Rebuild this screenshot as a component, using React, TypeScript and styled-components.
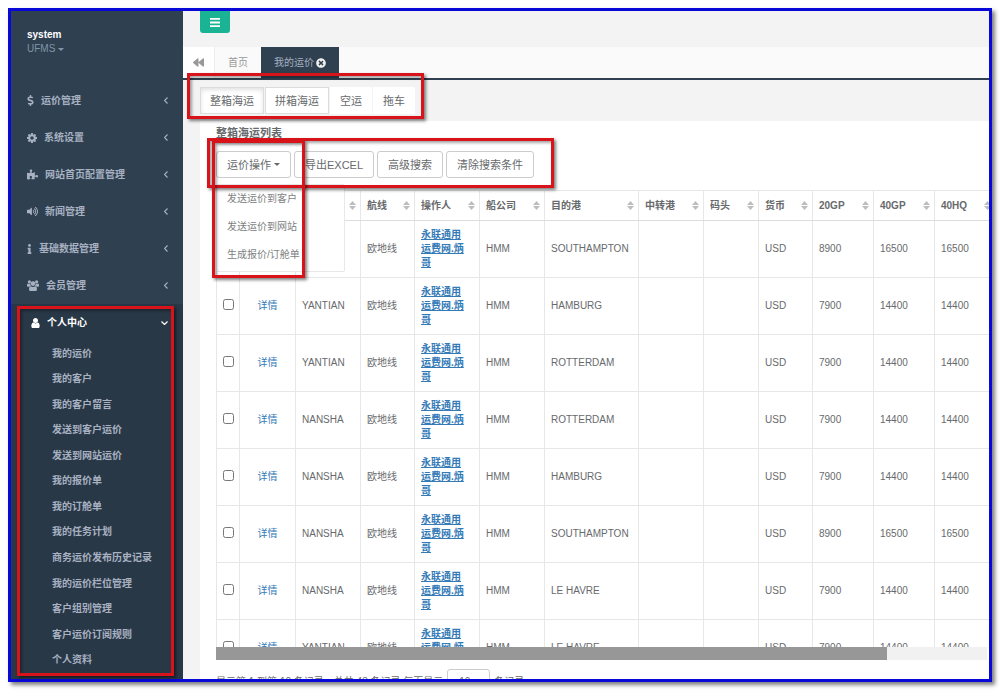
import React from 'react';
import styled, { createGlobalStyle, css } from 'styled-components';
import {
  FaBackward,
  FaDollarSign,
  FaInfo,
  FaPuzzlePiece,
  FaTimesCircle,
  FaVolumeUp,
} from 'react-icons/fa';

const color = {
  navy: '#2f4050',
  navyDark: '#293846',
  navText: '#a7b1c2',
  text: '#676a6c',
  link: '#337ab7',
  line: '#e7e7e7',
  page: '#f3f3f4',
  red: '#d8141a',
  blue: '#0808d8',
  green: '#1ab394',
};

const GlobalStyle = createGlobalStyle`
  *, *::before, *::after { box-sizing: border-box; }
  body {
    margin: 0;
    background: #fff;
    color: ${color.text};
    font-family: "Liberation Sans", "Noto Sans CJK SC", sans-serif;
    font-size: 10px;
    line-height: 14px;
  }
  button, select, input { font: inherit; color: inherit; margin: 0; }
  ul { list-style: none; margin: 0; padding: 0; }
  a { text-decoration: none; color: inherit; }
`;

const Page = styled.div`
  display: flex;
  height: 100vh;
  padding: 8px 8px 9px;
`;

const Frame = styled.div`
  position: relative;
  flex: 1;
  display: flex;
  min-width: 0;
  border: 3px solid ${color.blue};
  box-shadow: 3px 3px 4px rgba(0, 0, 0, 0.5);
`;

const Highlight = styled.div<{ $x: number; $y: number; $w: number; $h: number }>`
  position: absolute;
  z-index: 5;
  left: ${(p) => p.$x}px;
  top: ${(p) => p.$y}px;
  width: ${(p) => p.$w}px;
  height: ${(p) => p.$h}px;
  border: 3px solid ${color.red};
  box-shadow: 2px 2px 3px rgba(0, 0, 0, 0.5), inset 2px 2px 3px rgba(0, 0, 0, 0.35);
  pointer-events: none;
`;

/* Sidebar */

const Sidebar = styled.nav`
  display: flex;
  flex-direction: column;
  flex: 0 0 172px;
  background: ${color.navy};
  color: ${color.navText};
  overflow: hidden;
`;

const Profile = styled.div`
  height: 71px;
  padding: 17px 16px 0;
  color: #8095a8;
`;

const UserName = styled.strong`
  display: block;
  color: #fff;
`;

const Account = styled.a`
  display: inline-flex;
  align-items: center;
  gap: 3px;
`;

const Menu = styled.ul`
  flex: 1;
  display: flex;
  flex-direction: column;
  font-weight: 700;
`;

const MenuEntry = styled.li<{ $open?: boolean }>`
  ${(p) =>
    p.$open &&
    css`
      flex: 1;
      display: flex;
      flex-direction: column;
      padding-left: 4px;
      background: ${color.navyDark};
    `}
`;

const MenuLink = styled.a<{ $open?: boolean }>`
  display: flex;
  align-items: center;
  height: 37px;
  padding: 0 15px 0 16px;
  color: ${(p) => (p.$open ? '#fff' : 'inherit')};
`;

const MenuLabel = styled.span`
  flex: 1;
  margin-left: 7px;
`;

const SubMenu = styled.ul`
  flex: 1;
  display: flex;
  flex-direction: column;
  padding-bottom: 6px;
`;

const SubEntry = styled.li`
  flex: 1;
  display: flex;
  align-items: center;
  padding-left: 37px;
`;

/* Main column */

const Main = styled.main`
  flex: 1;
  min-width: 0;
  display: flex;
  flex-direction: column;
  background: ${color.page};
  overflow: hidden;
`;

const TopBar = styled.header`
  display: flex;
  align-items: flex-start;
  height: 36px;
  padding-left: 17px;
`;

const ToggleButton = styled.button`
  display: flex;
  align-items: center;
  justify-content: center;
  width: 30px;
  height: 22px;
  padding: 0;
  border: 0;
  border-radius: 0 0 3px 3px;
  background: ${color.green};
  color: #fff;
`;

const TabStrip = styled.div`
  display: flex;
  height: 33px;
  background: #fafafa;
  border-bottom: 2px solid ${color.navy};
`;

const ScrollTabs = styled.button`
  width: 32px;
  padding: 0;
  border: 0;
  border-right: 1px solid #eee;
  background: #fff;
  color: #999;
  display: flex;
  align-items: center;
  justify-content: center;
`;

const Tab = styled.a<{ $active?: boolean }>`
  display: flex;
  align-items: center;
  gap: 2px;
  padding: 0 13px;
  color: ${(p) => (p.$active ? color.navText : '#999')};
  background: ${(p) => (p.$active ? color.navy : 'transparent')};
`;

const CloseIcon = styled(FaTimesCircle)`
  color: #eee;
`;

const Content = styled.div`
  flex: 1;
  min-height: 0;
  display: flex;
  flex-direction: column;
  gap: 7px;
  padding: 7px 0 0 17px;
`;

const ModeGroup = styled.div`
  display: flex;
  gap: 1px;
  height: 27px;
  font-size: 11px;
`;

const ModeButton = styled.button<{ $state?: 'pressed' | 'outlined' }>`
  padding: 0 9px;
  border: 1px solid ${(p) => (p.$state ? '#dcdcdc' : '#fff')};
  background: #fff;
  box-shadow: ${(p) => (p.$state === 'pressed' ? 'inset 0 2px 4px rgba(0, 0, 0, 0.12)' : 'none')};
`;

const Card = styled.section`
  flex: 1;
  min-height: 0;
  display: flex;
  flex-direction: column;
  padding: 5px 0 0 16px;
  background: #fff;
`;

const CardTitle = styled.h1`
  margin: 0 0 11px;
  font-size: 11px;
  line-height: 14px;
  font-weight: 700;
`;

const Toolbar = styled.div`
  position: relative;
  display: flex;
  gap: 3px;
  margin-bottom: 12px;
  font-size: 11px;
`;

const ToolButton = styled.button`
  display: flex;
  align-items: center;
  gap: 3px;
  height: 27px;
  padding: 0 10px;
  border: 1px solid #ccc;
  border-radius: 3px;
  background: #fff;
`;

const Dropdown = styled.ul`
  position: absolute;
  z-index: 2;
  left: 0;
  top: 33px;
  width: 129px;
  padding-bottom: 2px;
  border: 1px solid #e8e8e8;
  border-radius: 2px;
  background: #fff;
  font-size: 10px;
`;

const DropdownLink = styled.a`
  display: block;
  padding: 0 10px;
  line-height: 28px;
  color: #7d7f81;
  white-space: nowrap;
`;

const TableScroller = styled.div`
  flex: 1;
  min-height: 0;
  overflow: hidden;
`;

const Table = styled.table`
  width: 779px;
  table-layout: fixed;
  border-collapse: collapse;
`;

const HeadCell = styled.th`
  height: 30px;
  padding: 0 4px 0 6px;
  border: 1px solid ${color.line};
  border-bottom-color: #ddd;
  text-align: left;
  font-weight: 700;
`;

const HeadInner = styled.div`
  display: flex;
  align-items: center;
  justify-content: space-between;
  white-space: nowrap;
`;

const Cell = styled.td<{ $wrap?: boolean; $center?: boolean }>`
  height: 57px;
  padding: ${(p) => (p.$center ? '0' : p.$wrap ? '7px 12px 7px 6px' : '7px 8px 7px 6px')};
  border: 1px solid ${color.line};
  text-align: ${(p) => (p.$center ? 'center' : 'left')};
  white-space: ${(p) => (p.$wrap ? 'normal' : 'nowrap')};
  vertical-align: middle;
`;

const RowCheck = styled.input`
  display: block;
  width: 11px;
  height: 11px;
  margin: 0 auto 3px;
`;

const DetailLink = styled.a`
  color: ${color.link};
`;

const OperatorLink = styled.a`
  color: ${color.link};
  font-weight: 700;
  text-decoration: underline;
`;

const ScrollTrack = styled.div`
  height: 13px;
  margin-right: 2px;
  background: #f1f1f1;
`;

const ScrollThumb = styled.div`
  width: 87%;
  height: 100%;
  background: #979797;
`;

const Pager = styled.footer`
  height: 19px;
  padding-top: 9px;
  overflow: hidden;
`;

const PagerLabel = styled.label`
  display: flex;
  align-items: center;
  gap: 4px;
`;

const PageSize = styled.select`
  width: 43px;
  height: 26px;
  padding: 0 11px;
  appearance: none;
  border: 1px solid #ccc;
  border-radius: 3px;
  background: #fff;
`;

/* Icons */

const SortIcon = () => (
  <svg width="7" height="9" viewBox="0 0 7 9" fill="#bdbdbd" aria-hidden="true">
    <path d="M3.5 0 7 4H0z" />
    <path d="M0 5h7L3.5 9z" />
  </svg>
);

const Caret = () => (
  <svg width="6" height="3" viewBox="0 0 6 3" fill="currentColor" aria-hidden="true">
    <path d="M0 0h6L3 3z" />
  </svg>
);

const Bars = () => (
  <svg width="10" height="9" viewBox="0 0 10 9" fill="currentColor" aria-hidden="true">
    <path d="M0 0h10v1.8H0zM0 3.6h10v1.8H0zM0 7.2h10V9H0z" />
  </svg>
);

const Chevron = ({ down }: { down?: boolean }) => (
  <svg
    width={down ? 7 : 4}
    height={down ? 4 : 7}
    viewBox={down ? '0 0 7 4' : '0 0 4 7'}
    fill="none"
    stroke="currentColor"
    strokeWidth="1.2"
    aria-hidden="true"
  >
    <path d={down ? 'M.5.5l3 3 3-3' : 'M3.5.5l-3 3 3 3'} />
  </svg>
);

const Cog = () => (
  <svg width="10" height="10" viewBox="128 128 1536 1536" fill="currentColor" aria-hidden="true">
    <path d="M1152 896q0-106-75-181t-181-75-181 75-75 181 75 181 181 75 181-75 75-181zm512-109v222q0 12-8 23t-20 13l-185 28q-19 54-39 91 35 50 107 138 10 12 10 25t-9 23q-27 37-99 108t-94 71q-12 0-26-9l-138-108q-44 23-91 38-16 136-29 186-7 28-36 28h-222q-14 0-24.5-8.5t-11.5-21.5l-28-184q-49-16-90-37l-141 107q-10 9-25 9-14 0-25-11-126-114-165-168-7-10-7-23 0-12 8-23 15-21 51-66.5t54-70.5q-27-50-41-99l-183-27q-13-2-21-12.5t-8-23.5v-222q0-12 8-23t19-13l186-28q14-46 39-92-40-57-107-138-10-12-10-24 0-10 9-23 26-36 98.5-107.5t94.5-71.5q13 0 26 10l138 107q44-23 91-38 16-136 29-186 7-28 36-28h222q14 0 24.5 8.5t11.5 21.5l28 184q49 16 90 37l142-107q9-9 24-9 13 0 25 10 129 119 165 170 7 8 7 22 0 12-8 23-15 21-51 66.5t-54 70.5q26 50 41 98l183 28q13 2 21 12.5t8 23.5z" />
  </svg>
);

const Person = () => (
  <svg width="9" height="10" viewBox="256 128 1280 1536" fill="currentColor" aria-hidden="true">
    <path d="M1536 1399q0 109-62.5 187t-150.5 78h-854q-88 0-150.5-78t-62.5-187q0-85 8.5-160.5t31.5-152 58.5-131 94-89 134.5-34.5q131 128 313 128t313-128q76 0 134.5 34.5t94 89 58.5 131 31.5 152 8.5 160.5zm-256-887q0 159-112.5 271.5t-271.5 112.5-271.5-112.5-112.5-271.5 112.5-271.5 271.5-112.5 271.5 112.5 112.5 271.5z" />
  </svg>
);

const Group = () => (
  <svg width="12" height="11" viewBox="0 0 12 11" fill="currentColor" aria-hidden="true">
    <circle cx="2.4" cy="1.8" r="1.6" />
    <circle cx="9.6" cy="1.8" r="1.6" />
    <circle cx="6" cy="3.6" r="2.3" />
    <path d="M0 6.3V5q0-1.5 1-1.5 1.200.7 2.300.3Q3.300 5 4 5.800q-1 0-1.600.9H.8Q0 6.700 0 6.300z" />
    <path d="M12 6.300V5q0-1.500-1-1.500-1.200.7-2.300.3 0 1.200-.7 2 1 0 1.600.9h1.600q.8 0 .8-.4z" />
    <path d="M2 9.500Q2 6.200 3.900 6.200 6 7.600 8.100 6.200 10 6.200 10 9.500 10 11 8.700 11H3.300Q2 11 2 9.500z" />
  </svg>
);

const menu: { icon: React.ReactNode; label: string }[] = [
  { icon: <FaDollarSign style={{ width: 7, height: 11 }} />, label: '运价管理' },
  { icon: <Cog />, label: '系统设置' },
  { icon: <FaPuzzlePiece size={11} />, label: '网站首页配置管理' },
  { icon: <FaVolumeUp size={11} />, label: '新闻管理' },
  { icon: <FaInfo style={{ width: 5, height: 10 }} />, label: '基础数据管理' },
  { icon: <Group />, label: '会员管理' },
];

const personal = [
  '我的运价',
  '我的客户',
  '我的客户留言',
  '发送到客户运价',
  '发送到网站运价',
  '我的报价单',
  '我的订舱单',
  '我的任务计划',
  '商务运价发布历史记录',
  '我的运价栏位管理',
  '客户组别管理',
  '客户运价订阅规则',
  '个人资料',
];

const columns = [
  { label: '', width: 23 },
  { label: '', width: 56 },
  { label: '起运港', width: 65 },
  { label: '航线', width: 54 },
  { label: '操作人', width: 65 },
  { label: '船公司', width: 65 },
  { label: '目的港', width: 94 },
  { label: '中转港', width: 65 },
  { label: '码头', width: 55 },
  { label: '货币', width: 54 },
  { label: '20GP', width: 61 },
  { label: '40GP', width: 61 },
  { label: '40HQ', width: 61 },
];

const rows = [
  ['YANTIAN', 'SOUTHAMPTON', '8900', '16500'],
  ['YANTIAN', 'HAMBURG', '7900', '14400'],
  ['YANTIAN', 'ROTTERDAM', '7900', '14400'],
  ['NANSHA', 'ROTTERDAM', '7900', '14400'],
  ['NANSHA', 'HAMBURG', '7900', '14400'],
  ['NANSHA', 'SOUTHAMPTON', '8900', '16500'],
  ['NANSHA', 'LE HAVRE', '7900', '14400'],
  ['YANTIAN', 'LE HAVRE', '7900', '14400'],
];

export default function App() {
  return (
    <Page>
      <GlobalStyle />
      <Frame>
        <Sidebar>
          <Profile>
            <UserName>system</UserName>
            <Account href="#">
              UFMS
              <Caret />
            </Account>
          </Profile>
          <Menu>
            {menu.map(({ icon, label }) => (
              <MenuEntry key={label}>
                <MenuLink href="#">
                  {icon}
                  <MenuLabel>{label}</MenuLabel>
                  <Chevron />
                </MenuLink>
              </MenuEntry>
            ))}
            <MenuEntry $open>
              <MenuLink href="#" $open>
                <Person />
                <MenuLabel>个人中心</MenuLabel>
                <Chevron down />
              </MenuLink>
              <SubMenu>
                {personal.map((label) => (
                  <SubEntry key={label}>
                    <a href="#">{label}</a>
                  </SubEntry>
                ))}
              </SubMenu>
            </MenuEntry>
          </Menu>
        </Sidebar>

        <Main>
          <TopBar>
            <ToggleButton aria-label="菜单">
              <Bars />
            </ToggleButton>
          </TopBar>
          <TabStrip>
            <ScrollTabs aria-label="向左">
              <FaBackward size={11} />
            </ScrollTabs>
            <Tab href="#">首页</Tab>
            <Tab href="#" $active>
              我的运价
              <CloseIcon size={10} />
            </Tab>
          </TabStrip>
          <Content>
            <ModeGroup>
              <ModeButton $state="pressed">整箱海运</ModeButton>
              <ModeButton $state="outlined">拼箱海运</ModeButton>
              <ModeButton>空运</ModeButton>
              <ModeButton>拖车</ModeButton>
            </ModeGroup>
            <Card>
              <CardTitle>整箱海运列表</CardTitle>
              <Toolbar>
                <ToolButton>
                  运价操作
                  <Caret />
                </ToolButton>
                <ToolButton>导出EXCEL</ToolButton>
                <ToolButton>高级搜索</ToolButton>
                <ToolButton>清除搜索条件</ToolButton>
                <Dropdown>
                  {['发送运价到客户', '发送运价到网站', '生成报价/订舱单'].map((label) => (
                    <li key={label}>
                      <DropdownLink href="#">{label}</DropdownLink>
                    </li>
                  ))}
                </Dropdown>
              </Toolbar>
              <TableScroller>
                <Table>
                  <colgroup>
                    {columns.map((c, i) => (
                      <col key={i} style={{ width: c.width }} />
                    ))}
                  </colgroup>
                  <thead>
                    <tr>
                      {columns.map((c, i) => (
                        <HeadCell key={i}>
                          {c.label && (
                            <HeadInner>
                              {c.label}
                              <SortIcon />
                            </HeadInner>
                          )}
                        </HeadCell>
                      ))}
                    </tr>
                  </thead>
                  <tbody>
                    {rows.map(([from, to, small, large], i) => (
                      <tr key={i}>
                        <Cell $center>
                          <RowCheck type="checkbox" aria-label={`${from} ${to}`} />
                        </Cell>
                        <Cell $center>
                          <DetailLink href="#">详情</DetailLink>
                        </Cell>
                        <Cell>{from}</Cell>
                        <Cell>欧地线</Cell>
                        <Cell $wrap>
                          <OperatorLink href="#">永联通用运费网.炳哥</OperatorLink>
                        </Cell>
                        <Cell>HMM</Cell>
                        <Cell>{to}</Cell>
                        <Cell />
                        <Cell />
                        <Cell>USD</Cell>
                        <Cell>{small}</Cell>
                        <Cell>{large}</Cell>
                        <Cell>{large}</Cell>
                      </tr>
                    ))}
                  </tbody>
                </Table>
              </TableScroller>
              <ScrollTrack>
                <ScrollThumb />
              </ScrollTrack>
              <Pager>
                <PagerLabel>
                  显示第 1 到第 10 条记录，总共 43 条记录 每页显示
                  <PageSize defaultValue="10">
                    <option>10</option>
                    <option>25</option>
                    <option>50</option>
                  </PageSize>
                  条记录
                </PagerLabel>
              </Pager>
            </Card>
          </Content>
        </Main>

        <Highlight $x={6} $y={295} $w={157} $h={370} />
        <Highlight $x={176} $y={62} $w={237} $h={46} />
        <Highlight $x={196} $y={127} $w={347} $h={50} />
        <Highlight $x={201} $y={129} $w={93} $h={138} />
      </Frame>
    </Page>
  );
}
